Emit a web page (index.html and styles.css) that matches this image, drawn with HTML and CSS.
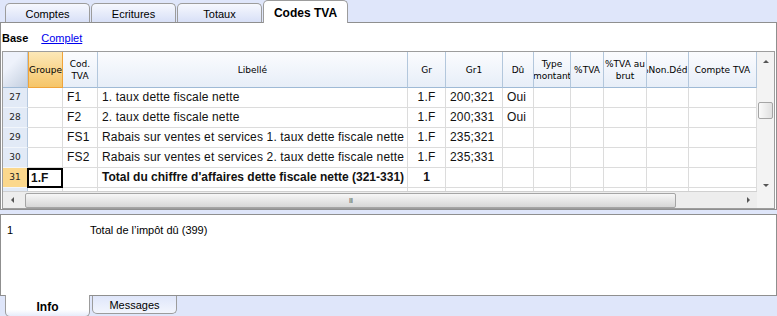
FILE: index.html
```html
<!DOCTYPE html>
<html lang="fr">
<head>
    <meta charset="UTF-8">
    <title>Codes TVA</title>
    <link rel="stylesheet" href="styles.css">
</head>
<body>
<div class="app">
    <div class="tabs">
        <div class="tab">Comptes</div>
        <div class="tab">Ecritures</div>
        <div class="tab">Totaux</div>
        <div class="tab active">Codes TVA</div>
    </div>

    <div class="panel">
        <div class="views">
            <span class="view-current">Base</span>
            <a class="view-link" href="#">Complet</a>
        </div>

        <div class="gridbox">
            <div class="gridmain">
                <div class="table">
                    <div class="row head">
                        <div class="cell corner-cell"></div>
                        <div class="cell hcell sel-col"><span>Groupe</span></div>
                        <div class="cell hcell"><span>Cod.<br>TVA</span></div>
                        <div class="cell hcell"><span>Libellé</span></div>
                        <div class="cell hcell"><span>Gr</span></div>
                        <div class="cell hcell"><span>Gr1</span></div>
                        <div class="cell hcell"><span>Dû</span></div>
                        <div class="cell hcell"><span>Type<br>montant</span></div>
                        <div class="cell hcell"><span>%TVA</span></div>
                        <div class="cell hcell"><span>%TVA au<br>brut</span></div>
                        <div class="cell hcell clip"><span>%Non.Déd</span></div>
                        <div class="cell hcell"><span>Compte TVA</span></div>
                    </div>

                    <div class="row">
                        <div class="cell num">27</div>
                        <div class="cell"></div>
                        <div class="cell">F1</div>
                        <div class="cell">1. taux dette fiscale nette</div>
                        <div class="cell center">1.F</div>
                        <div class="cell">200;321</div>
                        <div class="cell">Oui</div>
                        <div class="cell"></div><div class="cell"></div><div class="cell"></div><div class="cell"></div><div class="cell"></div>
                    </div>
                    <div class="row">
                        <div class="cell num">28</div>
                        <div class="cell"></div>
                        <div class="cell">F2</div>
                        <div class="cell">2. taux dette fiscale nette</div>
                        <div class="cell center">1.F</div>
                        <div class="cell">200;331</div>
                        <div class="cell">Oui</div>
                        <div class="cell"></div><div class="cell"></div><div class="cell"></div><div class="cell"></div><div class="cell"></div>
                    </div>
                    <div class="row">
                        <div class="cell num">29</div>
                        <div class="cell"></div>
                        <div class="cell">FS1</div>
                        <div class="cell">Rabais sur ventes et services 1. taux dette fiscale nette</div>
                        <div class="cell center">1.F</div>
                        <div class="cell">235;321</div>
                        <div class="cell"></div>
                        <div class="cell"></div><div class="cell"></div><div class="cell"></div><div class="cell"></div><div class="cell"></div>
                    </div>
                    <div class="row">
                        <div class="cell num">30</div>
                        <div class="cell"></div>
                        <div class="cell">FS2</div>
                        <div class="cell">Rabais sur ventes et services 2. taux dette fiscale nette</div>
                        <div class="cell center">1.F</div>
                        <div class="cell">235;331</div>
                        <div class="cell"></div>
                        <div class="cell"></div><div class="cell"></div><div class="cell"></div><div class="cell"></div><div class="cell"></div>
                    </div>
                    <div class="row total">
                        <div class="cell num current">31</div>
                        <div class="cell focus">1.F</div>
                        <div class="cell"></div>
                        <div class="cell">Total du chiffre d'affaires dette fiscale nette (321-331)</div>
                        <div class="cell center">1</div>
                        <div class="cell"></div>
                        <div class="cell"></div>
                        <div class="cell"></div><div class="cell"></div><div class="cell"></div><div class="cell"></div><div class="cell"></div>
                    </div>
                    <div class="row">
                        <div class="cell num"></div>
                        <div class="cell"></div><div class="cell"></div><div class="cell"></div><div class="cell"></div><div class="cell"></div>
                        <div class="cell"></div><div class="cell"></div><div class="cell"></div><div class="cell"></div><div class="cell"></div><div class="cell"></div>
                    </div>
                </div>

                <div class="vscroll">
                    <span class="arrow up"></span>
                    <span class="vthumb"></span>
                    <span class="vfill"></span>
                    <span class="arrow down"></span>
                </div>
            </div>

            <div class="hbar">
                <div class="hscroll">
                    <span class="arrow left"></span>
                    <span class="hthumb"><span class="grip">III</span></span>
                    <span class="arrow right"></span>
                </div>
                <div class="scorner"></div>
            </div>
        </div>
    </div>

    <div class="info">
        <div class="info-line">
            <span class="info-num">1</span>
            <span>Total de l’impôt dû (399)</span>
        </div>
    </div>

    <div class="btabs">
        <div class="btab active">Info</div>
        <div class="btab">Messages</div>
    </div>
</div>
</body>
</html>
```

FILE: styles.css
```css
* {
    box-sizing: border-box;
}
body {
    margin: 0;
    background: #dfe6fa;
    font-family: "Liberation Sans", Arial, sans-serif;
    font-size: 11px;
    color: #000;
}
.app {
    width: 777px;
    height: 316px;
    overflow: hidden;
}

/* top tabs */
.tabs {
    display: flex;
    align-items: flex-end;
    gap: 1px;
    height: 22px;
    padding-left: 5px;
}
.tab {
    width: 85px;
    height: 19px;
    border: 1px solid #9c9c9c;
    border-bottom: none;
    border-radius: 5px 5px 0 0;
    background: linear-gradient(#f6f8fe, #d8e0f7);
    display: flex;
    align-items: center;
    justify-content: center;
    padding-top: 2px;
}
.tab.active {
    height: 23px;
    margin-bottom: -1px;
    background: #fff;
    font-weight: bold;
    font-size: 12px;
    position: relative;
    z-index: 1;
}

.panel {
    height: 188px;
    background: #fff;
    border: 1px solid #8f8f8f;
}
.views {
    height: 28px;
    display: flex;
    align-items: center;
    gap: 13px;
    padding: 2px 0 0 1px;
}
.view-current {
    font-weight: bold;
}
.view-link {
    color: #0000ee;
}

/* grid */
.gridbox {
    margin-left: 1px;
    width: 773px;
    height: 158px;
    border: 1px solid #9d9d9d;
}
.gridmain {
    display: flex;
    height: 139px;
}
.table {
    width: 754px;
    overflow: hidden;
}
.row {
    display: grid;
    grid-template-columns: 25px 35px 35px 310px 38px 57px 31px 37px 33px 43px 42px 68px;
    height: 20px;
}
.cell {
    border-right: 1px solid #dcdcdc;
    border-bottom: 1px solid #dcdcdc;
    font-size: 12px;
    letter-spacing: 0.15px;
    padding: 0 0 0 4px;
    line-height: 19px;
    white-space: nowrap;
    overflow: hidden;
    color: #111;
}
.cell.center {
    text-align: center;
    padding: 0;
}
.cell.num {
    background: #e2eaf6;
    border-right: 1px solid #b5c8de;
    border-bottom: 1px solid #f2f6fb;
    font-family: "DejaVu Sans", sans-serif;
    font-size: 9px;
    letter-spacing: 0;
    text-align: center;
    padding: 0;
    color: #222;
}
.cell.num.current {
    background: #fbd88d;
}
.total .cell {
    font-weight: bold;
    letter-spacing: 0;
}
.total .cell.num {
    font-weight: normal;
}
.cell.focus {
    border: 2px solid #000;
    padding-left: 2px;
    line-height: 16px;
    margin-left: -1px;
}

.row.head {
    height: 36px;
}
.hcell {
    display: flex;
    align-items: center;
    justify-content: center;
    padding: 0;
    background: linear-gradient(#fbfcfe, #e7eef8);
    border-right: 1px solid #b3c7dc;
    border-bottom: 1px solid #9fbad6;
    font-family: "DejaVu Sans", sans-serif;
    font-size: 9px;
    letter-spacing: 0;
    line-height: 12px;
    text-align: center;
    color: #000;
}
.hcell span {
    white-space: nowrap;
}
.hcell.clip {
    justify-content: flex-start;
}
.hcell.clip span {
    margin-left: -7px;
}
.hcell.sel-col {
    background: linear-gradient(#fce8b8, #f6c568);
    border-right: 1px solid #f0a43a;
    border-left: 1px solid #f0a43a;
    border-bottom: 1px solid #f0a43a;
}
.corner-cell {
    background: linear-gradient(135deg, #eef2fb 35%, #c3cfe0);
    border-right: 1px solid #b3c7dc;
    border-bottom: 1px solid #9fbad6;
}

/* scrollbars */
.vscroll {
    width: 17px;
    background: #f3f3f3;
    display: flex;
    flex-direction: column;
    align-items: center;
    padding: 8px 0 4px;
}
.vthumb {
    margin-top: 39px;
    width: 15px;
    height: 17px;
    border: 1px solid #a5a5a5;
    border-radius: 2px;
    background: linear-gradient(90deg, #fafafa, #e0e0e0);
}
.vfill {
    flex: 1;
}
.arrow {
    width: 0;
    height: 0;
    border: 3px solid transparent;
}
.arrow.up {
    border-bottom-color: #555;
    border-top-width: 0;
}
.arrow.down {
    border-top-color: #555;
    border-bottom-width: 0;
}
.arrow.left {
    border-right-color: #555;
    border-left-width: 0;
}
.arrow.right {
    border-left-color: #555;
    border-right-width: 0;
}
.hbar {
    display: flex;
    height: 17px;
}
.hscroll {
    width: 754px;
    display: flex;
    align-items: center;
    padding: 0 7px 0 8px;
    background: #ededed;
    border-top: 1px solid #d0d0d0;
}
.hthumb {
    width: 651px;
    height: 15px;
    margin-left: 11px;
    margin-right: auto;
    border: 1px solid #a5a5a5;
    border-radius: 2px;
    background: linear-gradient(#f7f7f7, #d6d6d6);
    display: flex;
    align-items: center;
    justify-content: center;
}
.grip {
    font-size: 8px;
    color: #777;
    letter-spacing: -1px;
}
.scorner {
    width: 17px;
    background: #f3f3f3;
}

/* info panel */
.info {
    margin-top: 4px;
    height: 82px;
    background: #fff;
    border: 1px solid #8f8f8f;
}
.info-line {
    display: flex;
    padding: 9px 0 0 6px;
}
.info-num {
    width: 83px;
}

/* bottom tabs */
.btabs {
    display: flex;
    gap: 2px;
    padding-left: 5px;
}
.btab {
    width: 85px;
    height: 18px;
    border: 1px solid #9c9c9c;
    border-top: none;
    border-radius: 0 0 5px 5px;
    background: linear-gradient(#dfe6fa, #f2f5fd);
    display: flex;
    align-items: center;
    justify-content: center;
    font-size: 11px;
}
.btab.active {
    margin-top: -1px;
    height: 22px;
    background: linear-gradient(#fff 70%, #e6ecfb);
    font-weight: bold;
    font-size: 12px;
    padding-top: 3px;
}
```
